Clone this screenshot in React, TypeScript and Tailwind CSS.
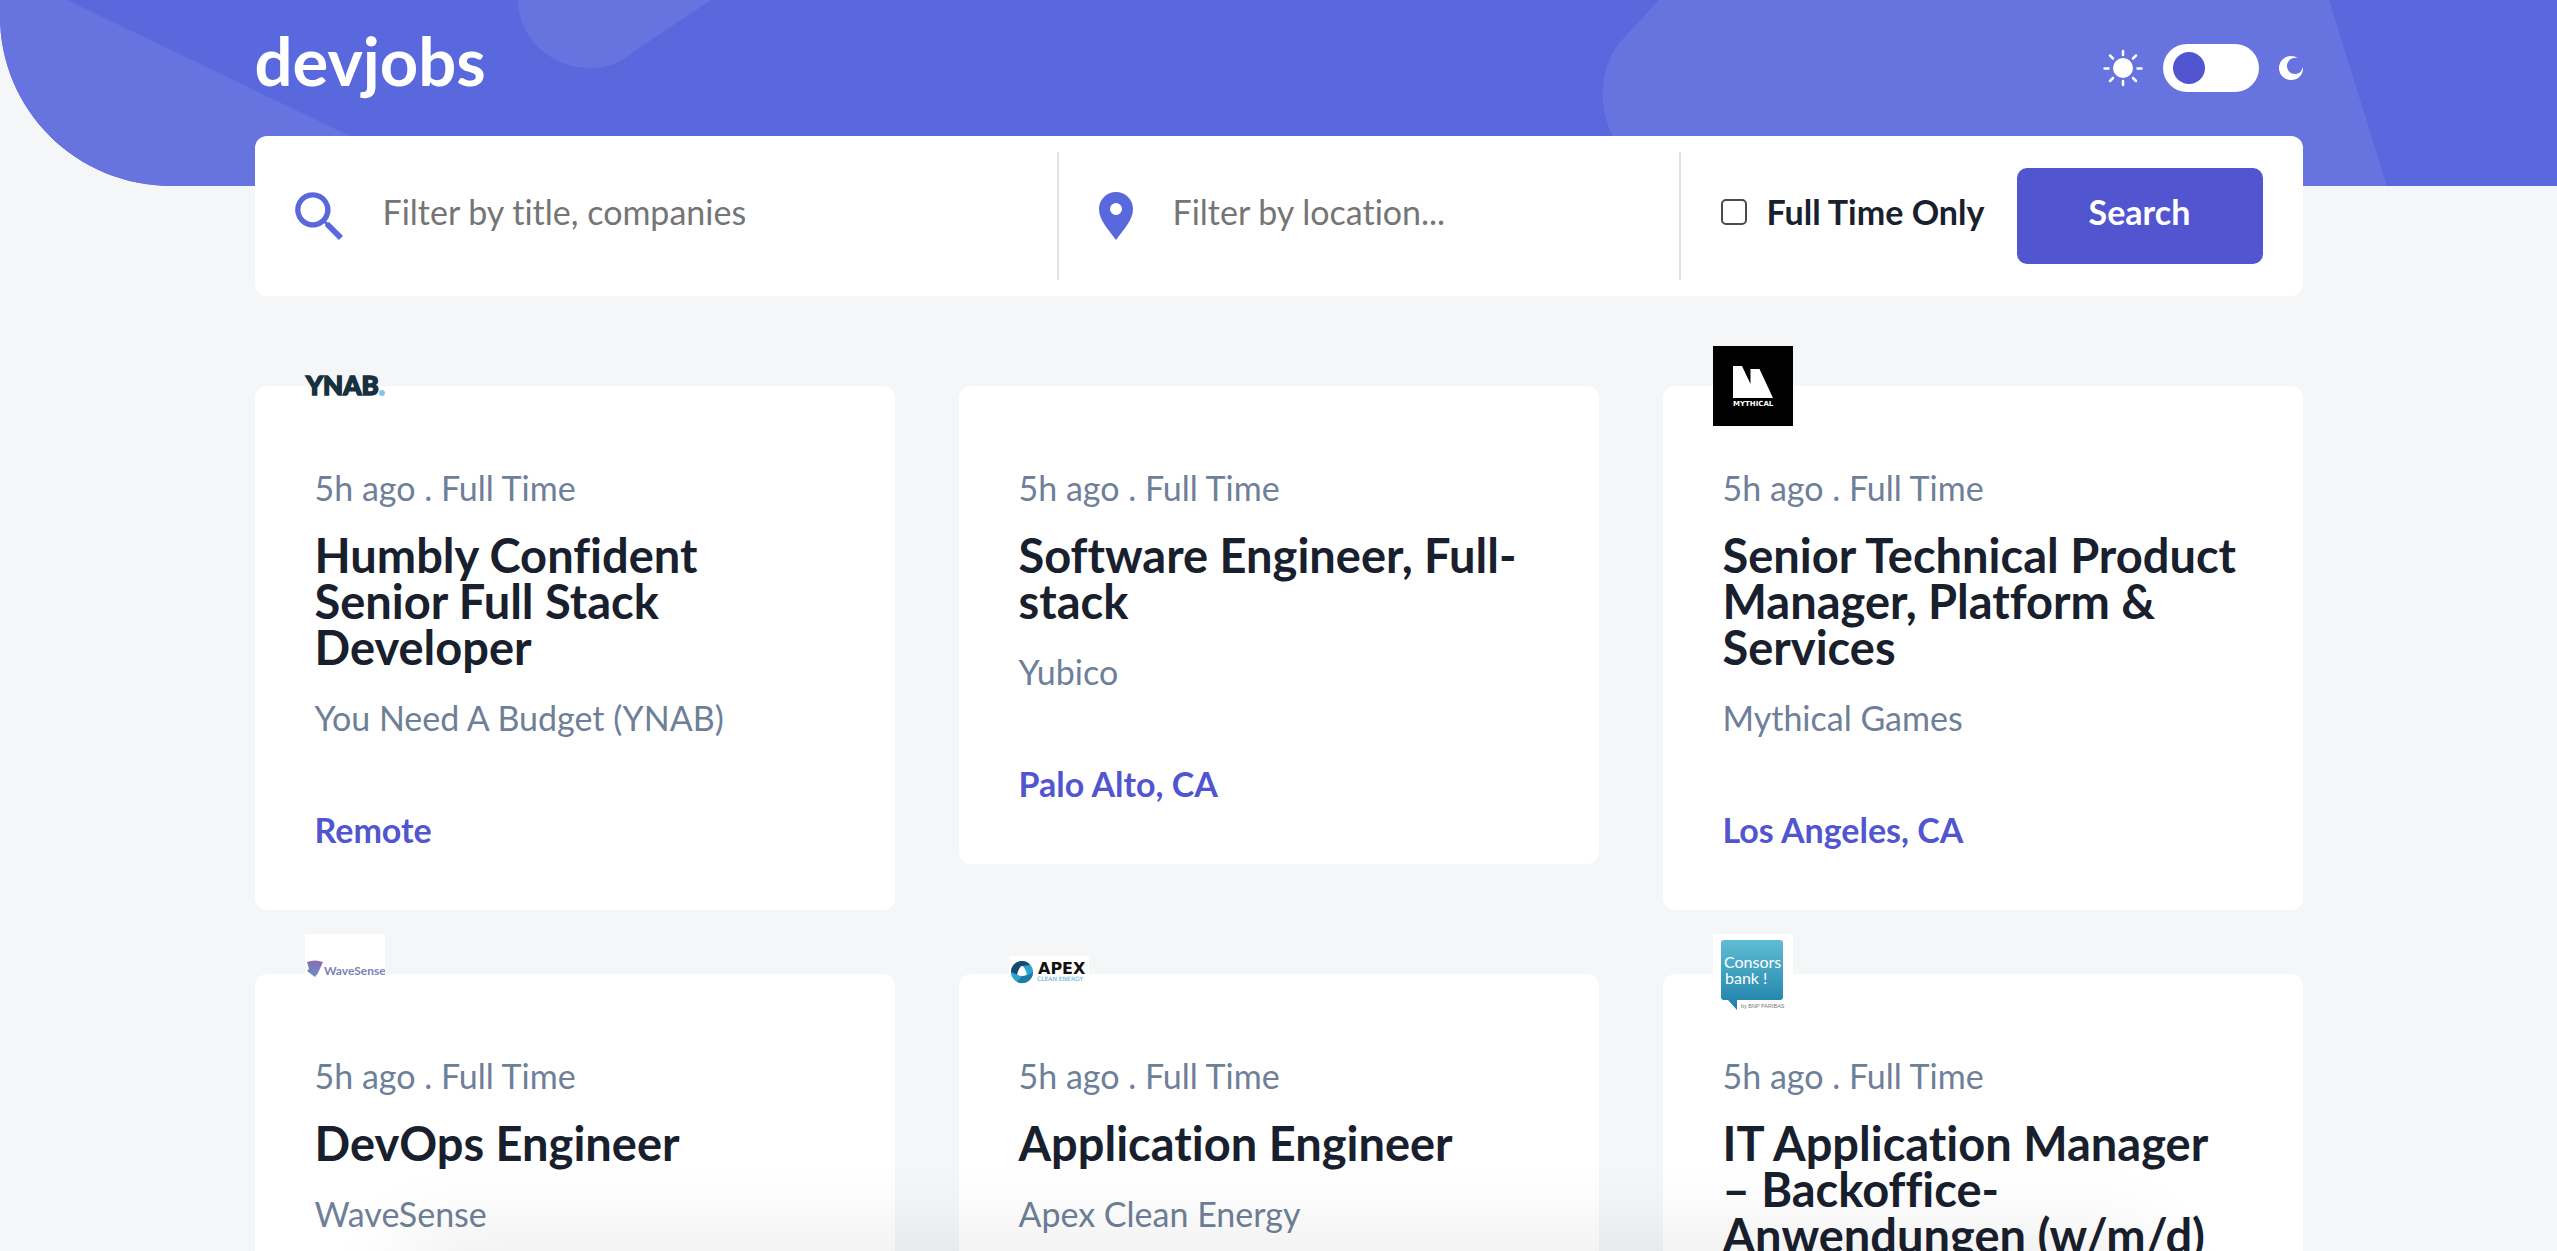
import { useId, useState, type ReactNode } from "react";

type Job = {
  posted: string;
  title: string;
  company: string;
  location: string;
  logo?: ReactNode;
};

function YnabLogo() {
  return (
    <svg viewBox="0 0 80 24" className="w-20 overflow-visible" role="img" aria-label="YNAB">
      <text x="1" y="21" fontFamily="Lato, sans-serif" fontWeight="900" fontSize="26" fill="#16323d" stroke="#16323d" strokeWidth="1.500">YNAB</text>
      <circle cx="77" cy="19" r="3" fill="#85c3e9" />
    </svg>
  );
}

function MythicalLogo() {
  return (
    <svg viewBox="0 0 80 80" className="w-20" role="img" aria-label="Mythical">
      <rect width="80" height="80" fill="#000" />
      <path d="M20 20h9l8.500 18V23h9L60 52H20z" fill="#fff" />
      <text x="20" y="60" fontFamily="DejaVu Sans, sans-serif" fontWeight="700" fontSize="7" fill="#fff">MYTHICAL</text>
    </svg>
  );
}

function WaveSenseLogo() {
  return (
    <svg viewBox="0 0 80 80" className="w-20" role="img" aria-label="WaveSense">
      <defs>
        <linearGradient id="wave" x1="0" y1="0" x2="0" y2="1">
          <stop offset="0" stopColor="#8b6bb0" />
          <stop offset="1" stopColor="#6a8fc8" />
        </linearGradient>
      </defs>
      <rect width="80" height="80" fill="#fff" />
      <path d="M2 28q8-3 16 0l-5 11-3 4-8-6 2-2z" fill="url(#wave)" />
      <text x="19" y="41" fontFamily="Lato, sans-serif" fontWeight="700" fontSize="12" fill="#7d7fb8">WaveSense</text>
    </svg>
  );
}

function ApexLogo() {
  return (
    <svg viewBox="0 0 80 36" className="w-20" role="img" aria-label="Apex Clean Energy">
      <rect width="80" height="36" fill="#fff" />
      <circle cx="13" cy="16" r="11" fill="#2fa3cb" />
      <path d="M13 5a11 11 0 0 0-11 11l7 3 4-9 8-1a11 11 0 0 0-8-4z" fill="#174a70" />
      <path d="M24 16a11 11 0 0 1-16 10l5-6 6-1z" fill="#1c7ea8" />
      <path d="M13 10q2.500 0 5 8.500-5 3-10 0Q10.500 10 13 10z" fill="#fff" />
      <text x="29" y="18" fontFamily="DejaVu Sans, sans-serif" fontWeight="700" fontSize="16" fill="#111">APEX</text>
      <text x="28" y="25" fontFamily="DejaVu Sans, sans-serif" fontSize="6" fill="#4fa8d0">CLEAN ENERGY</text>
    </svg>
  );
}

function ConsorsLogo() {
  return (
    <svg viewBox="0 0 80 80" className="w-20" role="img" aria-label="Consorsbank">
      <defs>
        <linearGradient id="consors" x1="0" y1="0" x2="0" y2="1">
          <stop offset="0" stopColor="#5fbdd3" />
          <stop offset="1" stopColor="#1c7fa8" />
        </linearGradient>
      </defs>
      <rect width="80" height="80" fill="#fff" />
      <path d="M11 6h56q3 0 3 3v54q0 3-3 3H24v10l-9-10h-4q-3 0-3-3V9q0-3 3-3z" fill="url(#consors)" />
      <g fontFamily="Lato, sans-serif" fill="#fff">
        <text x="11" y="34" fontSize="16">Consors</text>
        <text x="12" y="50" fontSize="16">bank !</text>
      </g>
      <text x="28" y="74" fontFamily="Liberation Sans, sans-serif" fontSize="5.500" fill="#777">by BNP PARIBAS</text>
    </svg>
  );
}

const jobs: Job[] = [
  { posted: "5h ago . Full Time", title: "Humbly Confident Senior Full\u00a0Stack Developer", company: "You Need A Budget (YNAB)", location: "Remote", logo: <YnabLogo /> },
  { posted: "5h ago . Full Time", title: "Software Engineer, Full-stack", company: "Yubico", location: "Palo Alto, CA" },
  { posted: "5h ago . Full Time", title: "Senior Technical Product Manager, Platform & Services", company: "Mythical Games", location: "Los Angeles, CA", logo: <MythicalLogo /> },
  { posted: "5h ago . Full Time", title: "DevOps Engineer", company: "WaveSense", location: "Remote", logo: <WaveSenseLogo /> },
  { posted: "5h ago . Full Time", title: "Application Engineer", company: "Apex Clean Energy", location: "Remote", logo: <ApexLogo /> },
  { posted: "5h ago . Full Time", title: "IT Application Manager –\u00a0Backoffice-Anwendungen (w/m/d)", company: "Consorsbank", location: "Nürnberg", logo: <ConsorsLogo /> },
];

function HeaderPattern() {
  return (
    <svg
      viewBox="0 0 2557 186"
      preserveAspectRatio="none"
      className="absolute inset-x-0 top-0 -z-10 h-[186px] w-full"
      aria-hidden="true"
    >
      <path d="M0 0H2557V186H172C76 186 0 110 0 16z" fill="#5968dd" />
      <g fill="#6773df">
        <path d="M0 0H67L454 186H172C76 186 0 110 0 16z" />
        <path d="M518 0A72 68 0 0 0 590 68Q616 68 636 50L711 0z" />
        <path d="M1659 0L1620 42C1594 74 1596 132 1634 160L1660 186H2387L2329 0z" />
      </g>
    </svg>
  );
}

function Sun() {
  return (
    <svg viewBox="0 0 40 38" className="h-[38px] w-10" fill="none" stroke="#fff" strokeWidth="2.500" strokeLinecap="round" aria-hidden="true">
      <circle cx="20" cy="19" r="10" fill="#fff" stroke="none" />
      <path d="M20 2v4M20 32v4M1.500 19.500h4M34.500 19.500h4M7 6.500l3 3M33 6.500l-3 3M7 32l3-3M33 32l-3-3" />
    </svg>
  );
}

function Moon() {
  return (
    <svg viewBox="0 0 24 24" className="size-6" fill="#fff" aria-hidden="true">
      <path d="M12 0C14.500 0 17 .7 19 2C12 .500 8 5.500 8 10C8 14.500 11.500 18 16 18C20 18 22.800 15.500 23.800 11C25 18 19.500 24 12 24A12 12 0 0 1 12 0z" />
    </svg>
  );
}

function JobCard({ job }: { job: Job }) {
  return (
    <article className="relative rounded-xl bg-white px-15 pt-[82px] pb-15">
      {job.logo && (
        <div className="absolute -top-10 left-[50px] flex size-20 items-center">{job.logo}</div>
      )}
      <p className="text-[#6e8098]">{job.posted}</p>
      <h2 className="mt-6 text-[47px] leading-[46px] font-bold text-[#19202d]">{job.title}</h2>
      <p className="mt-7 text-[#6e8098]">{job.company}</p>
      <p className="mt-18 font-bold text-[#5156d0]">{job.location}</p>
    </article>
  );
}

export default function App() {
  const id = useId();
  const [dark, setDark] = useState(false);
  return (
    <div className="h-screen overflow-y-auto bg-[#f4f6f8] font-[Lato,sans-serif] text-[34px] leading-10 [font-variant-ligatures:none] [scrollbar-width:none]">
      <div className="relative isolate">
        <HeaderPattern />
        <div className="mx-auto w-full max-w-[2048px]">
          <header className="flex h-[136px] items-start justify-between">
            <a href="#" className="pt-7 text-[67px] leading-16 font-bold text-white">devjobs</a>
            <div className="flex items-center gap-5 pt-11">
              <Sun />
              <button
                type="button"
                role="switch"
                aria-checked={dark}
                aria-label="Dark mode"
                onClick={() => setDark(!dark)}
                className="flex h-12 w-24 items-center rounded-full bg-white px-[10px]"
              >
                <span className="size-8 rounded-full bg-[#5156d0]" />
              </button>
              <Moon />
            </div>
          </header>

          <form className="grid h-40 grid-cols-[802fr_622fr_624fr] items-stretch rounded-xl bg-white py-4" onSubmit={(e) => e.preventDefault()}>
            <div className="flex items-center gap-10 pl-10">
              <label htmlFor={`${id}-title`} aria-label="Filter by title, companies">
                <svg viewBox="0 0 48 48" className="size-12" fill="#5968dd" aria-hidden="true">
                  <path fillRule="evenodd" d="M34.300 30.200h-2.200l-.8-.8A17.700 17.700 0 1 0 29.400 31.300l.8.8v2.200L43.900 48 48 43.900zM17.800 30.200a12.300 12.300 0 1 1 0-24.700 12.300 12.300 0 0 1 0 24.700z" />
                </svg>
              </label>
              <input id={`${id}-title`} type="text" placeholder="Filter by title, companies" className="min-w-0 flex-1 pb-2 outline-none placeholder:text-[#757575]" />
            </div>
            <div className="flex items-center gap-10 border-l-2 border-[#e2e3e5] pl-10">
              <label htmlFor={`${id}-location`} aria-label="Filter by location">
                <svg viewBox="0 0 34 48" className="h-12 w-[34px]" fill="#5968dd" aria-hidden="true">
                  <path fillRule="evenodd" d="M17 0A17 17 0 0 0 0 17c0 11 9 20 17 31 8-11 17-20 17-31A17 17 0 0 0 17 0zm0 23a6 6 0 1 1 0-12 6 6 0 0 1 0 12z" />
                </svg>
              </label>
              <input id={`${id}-location`} type="text" placeholder="Filter by location..." className="min-w-0 flex-1 pb-2 outline-none placeholder:text-[#757575]" />
            </div>
            <div className="flex items-center justify-between border-l-2 border-[#e2e3e5] px-10">
              <label className="flex items-center gap-5 pb-2 font-bold text-[#19202d]">
                <input type="checkbox" className="size-[26px] appearance-none rounded-[5px] border-2 border-[#4a4a4a] bg-white checked:bg-[#5156d0]" />
                Full Time Only
              </label>
              <button type="submit" className="h-24 w-[246px] rounded-[10px] bg-[#5156d0] pb-2 font-bold text-white">Search</button>
            </div>
          </form>

          <main className="mt-[90px] grid grid-cols-3 items-start gap-16 pb-16">
            {jobs.map((job) => (
              <JobCard key={job.title} job={job} />
            ))}
          </main>
        </div>
      </div>
      <div className="pointer-events-none fixed right-[17%] -bottom-10 left-[17%] h-5 rounded-[10px] shadow-[0_0_90px_30px_rgba(0,0,0,0.090)]" aria-hidden="true" />
    </div>
  );
}
